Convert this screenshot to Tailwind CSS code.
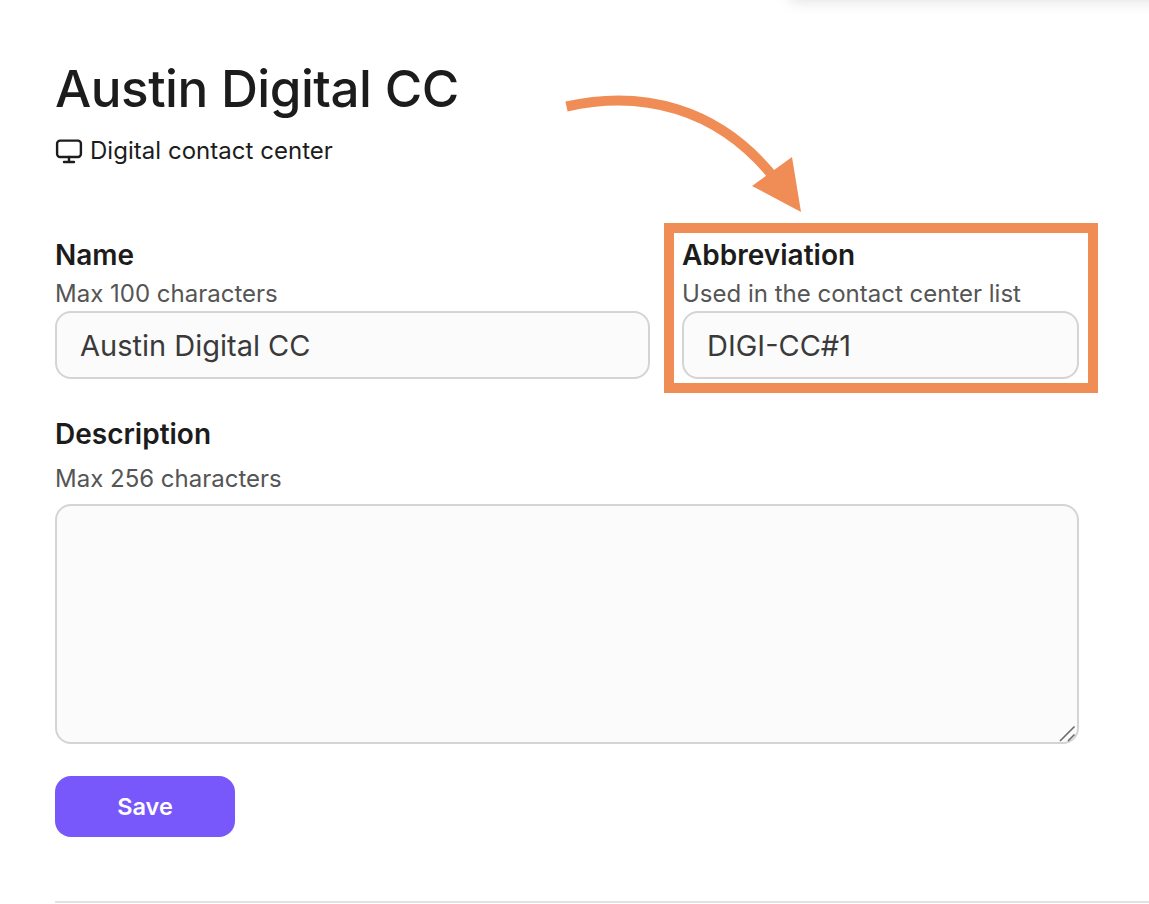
<!DOCTYPE html>
<html>
<head>
<meta charset="utf-8">
<script src="https://cdn.jsdelivr.net/npm/@tailwindcss/browser@4"></script>
</head>
<body class="bg-white">
<div class="relative w-[1149px] h-[904px] overflow-hidden bg-white font-['Inter',sans-serif] text-[#1c1c1c]">
  <div class="absolute top-[-20px] left-[790px] w-[400px] h-[20px] shadow-[0_0_16px_rgba(0,0,0,0.14)] bg-white"></div>

  <main class="pl-[55px] pt-[58px] flex flex-col">
    <h1 class="text-[51.2px] leading-[60px] font-medium tracking-[-0.5px]">Austin Digital CC</h1>
    <div class="mt-[18px] flex items-center gap-[7px] h-[30px] text-[24px] tracking-[0.03px] text-[#1c1c1c]">
      <svg class="w-[28px] h-[28px]" viewBox="0 0 28 28" fill="none" stroke="#1c1c1c" stroke-width="2.4" stroke-linecap="round" stroke-linejoin="round"><rect x="2.1" y="3.6" width="23.8" height="16.4" rx="3"/><path d="M14 20v4.2M9 25h10"/></svg>
      <span>Digital contact center</span>
    </div>

    <div class="mt-[73px] grid grid-cols-[595px_397px] gap-x-[32px] w-[1024px]">
      <label class="flex flex-col">
        <span class="text-[28px] leading-[32px] font-semibold">Name</span>
        <span class="mt-[9px] text-[24px] leading-[28px] text-[#555555]">Max 100 characters</span>
        <input value="Austin Digital CC" class="mt-[3px] h-[68px] rounded-[16px] border-2 border-[#d4d4d4] bg-[#fbfbfb] px-[23px] text-[29px] text-[#3a3a3a] outline-none">
      </label>
      <label class="flex flex-col">
        <span class="text-[28px] leading-[32px] font-semibold">Abbreviation</span>
        <span class="mt-[9px] text-[24px] leading-[28px] text-[#555555]">Used in the contact center list</span>
        <input value="DIGI-CC#1" class="mt-[3px] h-[68px] rounded-[16px] border-2 border-[#d4d4d4] bg-[#fbfbfb] px-[23px] text-[29px] text-[#3a3a3a] outline-none">
      </label>
    </div>

    <div class="mt-[39px] w-[1024px] flex flex-col">
      <span class="text-[28px] leading-[32px] font-semibold">Description</span>
      <span class="mt-[15px] text-[24px] leading-[28px] text-[#555555]">Max 256 characters</span>
      <div class="relative mt-[11px] h-[240px] w-full">
        <textarea class="block h-full w-full resize-none rounded-[16px] border-2 border-[#d4d4d4] bg-[#fbfbfb] outline-none"></textarea>
        <svg class="absolute right-[3px] bottom-[2px] pointer-events-none" width="17" height="18" viewBox="0 0 17 18" fill="none" stroke="#6b6b6b" stroke-width="1.6"><path d="M1 17L15.5 2.5M9 17L15.5 10.5"/></svg>
      </div>
    </div>

    <button class="mt-[32px] w-[180px] h-[61px] rounded-[16px] bg-[#7857fb] text-white text-[23.5px] font-semibold">Save</button>
    <div class="mt-[64px] h-[2px] bg-[#e2e2e2]"></div>
  </main>

  <div class="absolute left-[664px] top-[223px] w-[434px] h-[170px] border-[10px] border-[#f08d56] pointer-events-none"></div>
  <svg class="absolute left-0 top-0 pointer-events-none" width="1149" height="904" viewBox="0 0 1149 904" fill="none">
    <path d="M566.5 106.5C640 90 718 106 776 180" stroke="#f08d56" stroke-width="10"/>
    <path d="M792 157L801 212L752 186Z" fill="#f08d56"/>
  </svg>
</div>
</body>
</html>
